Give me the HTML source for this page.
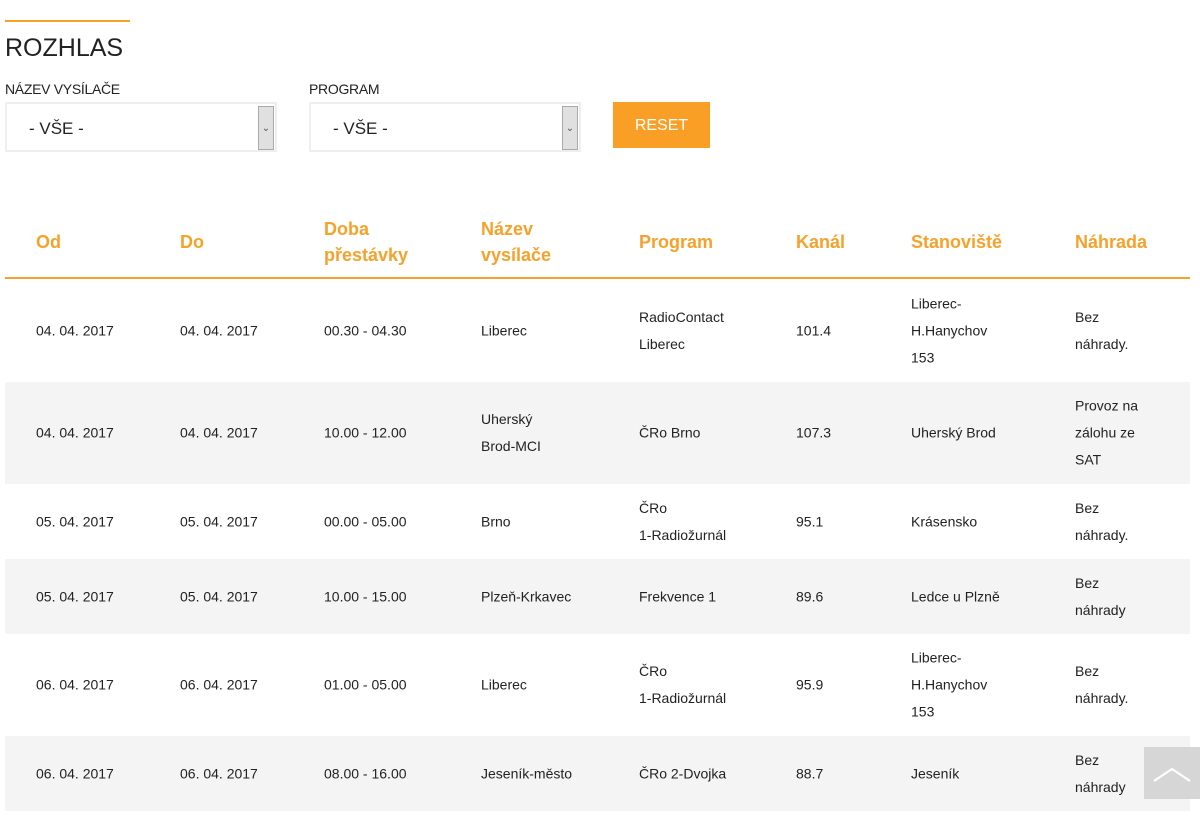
<!DOCTYPE html>
<html><head><meta charset="utf-8"><style>
*{margin:0;padding:0;box-sizing:border-box}
body{width:1200px;height:821px;background:#fff;font-family:"Liberation Sans",sans-serif;color:#222;position:relative;overflow:hidden}
.a{position:absolute}
.bar{left:5px;top:20px;width:125px;height:2px;background:#f7a12a}
h1{position:absolute;left:5px;top:34px;font-size:25px;font-weight:normal;color:#222;letter-spacing:0}
.lbl{font-size:14px;top:81px;letter-spacing:-0.3px}
.sel{top:102px;height:50px;border:2px solid #eee;background:#fff;font-size:17px;padding:15px 0 0 22px}
.sel .ar{position:absolute;right:1px;top:2px;width:16px;height:44px;background:#e0e0e0;border:1px solid #aaa;font-size:10px;text-align:center;line-height:44px;color:#555;padding:0}
.btn{left:613px;top:102px;width:97px;height:46px;background:#f99f25;color:#fff;font-size:16px;text-align:center;line-height:48px}
.th{color:#f7a12a;font-weight:bold;font-size:18px;line-height:26px}
.hl{left:5px;top:277px;width:1185px;height:2px;background:#f7a12a}
.row{position:absolute;left:5px;width:1185px}
.g{background:#f4f4f4}
.c{position:absolute;font-size:14px;line-height:27px;top:50%;transform:translateY(-50%)}
.up{left:1144px;top:747px;width:56px;height:52px;background:#d6d6d6}
</style></head><body>
<div class="a bar"></div>
<h1>ROZHLAS</h1>
<div class="a lbl" style="left:5px">NÁZEV VYSÍLAČE</div>
<div class="a lbl" style="left:309px">PROGRAM</div>
<div class="a sel" style="left:5px;width:272px">- VŠE -<div class="ar">&#8964;</div></div>
<div class="a sel" style="left:309px;width:272px">- VŠE -<div class="ar">&#8964;</div></div>
<div class="a btn">RESET</div>
<div class="a th" style="left:36px;top:229px">Od</div>
<div class="a th" style="left:180px;top:229px">Do</div>
<div class="a th" style="left:324px;top:216px">Doba<br>přestávky</div>
<div class="a th" style="left:481px;top:216px">Název<br>vysílače</div>
<div class="a th" style="left:639px;top:229px">Program</div>
<div class="a th" style="left:796px;top:229px">Kanál</div>
<div class="a th" style="left:911px;top:229px">Stanoviště</div>
<div class="a th" style="left:1075px;top:229px">Náhrada</div>
<div class="a hl"></div>

<div class="row" style="top:280px;height:102px">
<div class="c" style="left:31px">04. 04. 2017</div><div class="c" style="left:175px">04. 04. 2017</div><div class="c" style="left:319px">00.30 - 04.30</div><div class="c" style="left:476px">Liberec</div><div class="c" style="left:634px">RadioContact<br>Liberec</div><div class="c" style="left:791px">101.4</div><div class="c" style="left:906px">Liberec-<br>H.Hanychov<br>153</div><div class="c" style="left:1070px">Bez<br>náhrady.</div></div>
<div class="row g" style="top:382px;height:102px">
<div class="c" style="left:31px">04. 04. 2017</div><div class="c" style="left:175px">04. 04. 2017</div><div class="c" style="left:319px">10.00 - 12.00</div><div class="c" style="left:476px">Uherský<br>Brod-MCI</div><div class="c" style="left:634px">ČRo Brno</div><div class="c" style="left:791px">107.3</div><div class="c" style="left:906px">Uherský Brod</div><div class="c" style="left:1070px">Provoz na<br>zálohu ze<br>SAT</div></div>
<div class="row" style="top:484px;height:75px">
<div class="c" style="left:31px">05. 04. 2017</div><div class="c" style="left:175px">05. 04. 2017</div><div class="c" style="left:319px">00.00 - 05.00</div><div class="c" style="left:476px">Brno</div><div class="c" style="left:634px">ČRo<br>1-Radiožurnál</div><div class="c" style="left:791px">95.1</div><div class="c" style="left:906px">Krásensko</div><div class="c" style="left:1070px">Bez<br>náhrady.</div></div>
<div class="row g" style="top:559px;height:75px">
<div class="c" style="left:31px">05. 04. 2017</div><div class="c" style="left:175px">05. 04. 2017</div><div class="c" style="left:319px">10.00 - 15.00</div><div class="c" style="left:476px">Plzeň-Krkavec</div><div class="c" style="left:634px">Frekvence 1</div><div class="c" style="left:791px">89.6</div><div class="c" style="left:906px">Ledce u Plzně</div><div class="c" style="left:1070px">Bez<br>náhrady</div></div>
<div class="row" style="top:634px;height:102px">
<div class="c" style="left:31px">06. 04. 2017</div><div class="c" style="left:175px">06. 04. 2017</div><div class="c" style="left:319px">01.00 - 05.00</div><div class="c" style="left:476px">Liberec</div><div class="c" style="left:634px">ČRo<br>1-Radiožurnál</div><div class="c" style="left:791px">95.9</div><div class="c" style="left:906px">Liberec-<br>H.Hanychov<br>153</div><div class="c" style="left:1070px">Bez<br>náhrady.</div></div>
<div class="row g" style="top:736px;height:75px">
<div class="c" style="left:31px">06. 04. 2017</div><div class="c" style="left:175px">06. 04. 2017</div><div class="c" style="left:319px">08.00 - 16.00</div><div class="c" style="left:476px">Jeseník-město</div><div class="c" style="left:634px">ČRo 2-Dvojka</div><div class="c" style="left:791px">88.7</div><div class="c" style="left:906px">Jeseník</div><div class="c" style="left:1070px">Bez<br>náhrady</div></div>
<div class="a up"><svg width="56" height="52"><path d="M10 34 L28 22 L46 34" stroke="#fff" stroke-width="2" fill="none"/></svg></div>
</body></html>
